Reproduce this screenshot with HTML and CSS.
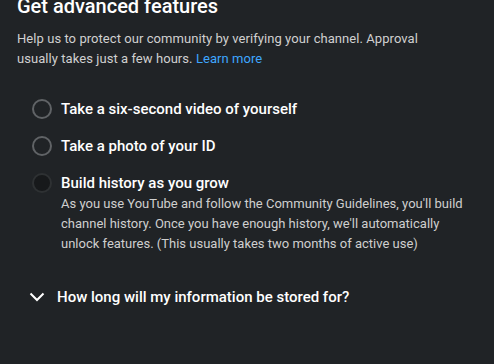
FILE: index.html
```html
<!DOCTYPE html>
<html lang="en">
<head>
    <meta charset="UTF-8">
    <title>Get advanced features</title>
    <link rel="stylesheet" href="styles.css">
</head>
<body>
    <div class="panel">
        <h1>Get advanced features</h1>
        <p class="intro">Help us to protect our community by verifying your channel. Approval usually takes just a few hours. <a href="#">Learn more</a></p>

        <ul class="options">
            <li class="option">
                <span class="radio"></span>
                <div class="option-text">
                    <div class="option-title">Take a six-second video of yourself</div>
                </div>
            </li>
            <li class="option">
                <span class="radio"></span>
                <div class="option-text">
                    <div class="option-title">Take a photo of your ID</div>
                </div>
            </li>
            <li class="option">
                <span class="radio disabled"></span>
                <div class="option-text">
                    <div class="option-title">Build history as you grow</div>
                    <div class="option-desc">As you use YouTube and follow the Community Guidelines, you'll build channel history. Once you have enough history, we'll automatically unlock features. (This usually takes two months of active use)</div>
                </div>
            </li>
        </ul>

        <div class="faq">
            <svg class="chevron" width="24" height="24" viewBox="0 0 24 24">
                <path d="M5.5 8.5 L12 15 L18.5 8.5" fill="none" stroke="#fff" stroke-width="2"/>
            </svg>
            <span>How long will my information be stored for?</span>
        </div>
    </div>
</body>
</html>
```

FILE: styles.css
```css
body {
    margin: 0;
    background-color: #202326;
    font-family: Roboto, "Noto Sans", sans-serif;
    color: #fff;
}
.panel {
    padding: 0 17px;
}
h1 {
    font-size: 20px;
    font-weight: 500;
    line-height: 24px;
    margin: -6px 0 0 0;
}
.intro {
    font-size: 13px;
    letter-spacing: 0.06px;
    line-height: 20px;
    color: #d0d0d0;
    margin: 11px 0 0 0;
    max-width: 420px;
}
.intro a {
    color: #3ea6ff;
    text-decoration: none;
}
.options {
    list-style: none;
    margin: 30px 0 0 0;
    padding: 0 0 0 15px;
}
.option {
    display: flex;
    align-items: flex-start;
    margin-bottom: 17px;
}
.radio {
    width: 16px;
    height: 16px;
    border: 2px solid #606366;
    border-radius: 50%;
    margin: 0 9px 0 0;
    flex-shrink: 0;
}
.radio.disabled {
    border-color: #2e3133;
    background-color: #17191b;
}
.option-title {
    font-size: 15px;
    font-weight: 500;
    line-height: 20px;
}
.option-desc {
    font-size: 13px;
    line-height: 20px;
    color: #cfcfcf;
    margin-top: 1px;
}
.faq {
    display: flex;
    align-items: center;
    gap: 8px;
    margin-top: 31px;
    padding-left: 8px;
    font-size: 15px;
    font-weight: 500;
}
.chevron {
    width: 24px;
    height: 24px;
}
```
